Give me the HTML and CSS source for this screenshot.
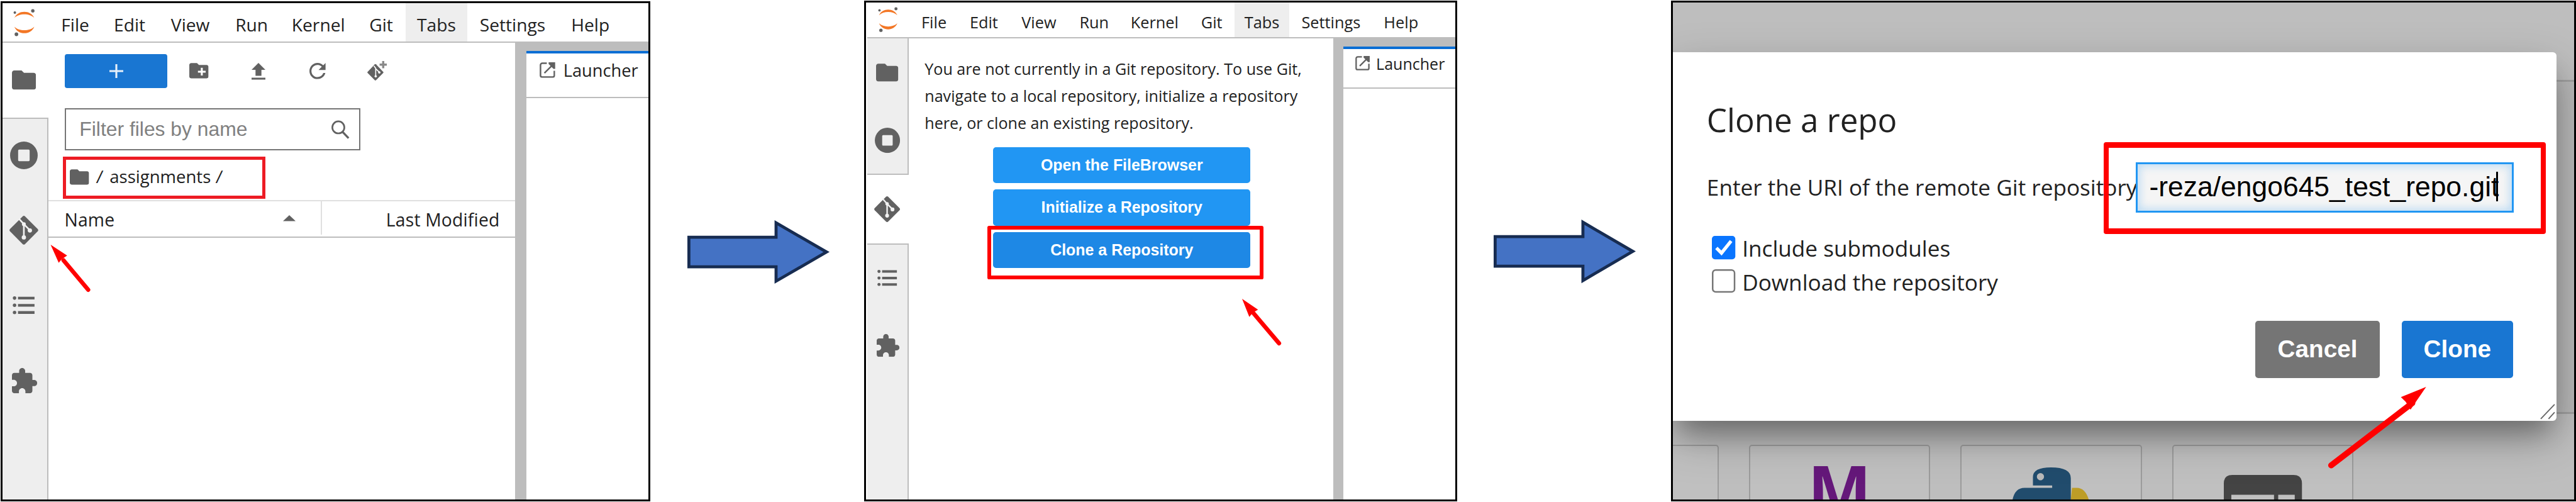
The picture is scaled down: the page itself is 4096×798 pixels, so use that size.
FILE: index.html
```html
<!DOCTYPE html>
<html lang="en">
<head>
<meta charset="utf-8">
<title>Cloning a repository in JupyterLab</title>
<link rel="stylesheet" href="styles.css">
</head>
<body>
<svg class="sprite" aria-hidden="true">
  <symbol id="jupyter" viewBox="0 0 38 46">
    <path d="M2 15C8 1 30 1 36 15 28 7 10 7 2 15z" fill="#f37726"/>
    <path d="M2 30C8 45 30 45 36 30 28 38 10 38 2 30z" fill="#f37726"/>
    <circle cx="2.8" cy="6" r="2.2" fill="#616161"/><circle cx="33.5" cy="3" r="2.9" fill="#616161"/><circle cx="5.5" cy="43" r="3.1" fill="#616161"/>
  </symbol>
  <symbol id="folder" viewBox="2 4 20 16"><path d="M10 4H4c-1.100 0-2 .9-2 2v12c0 1.100.9 2 2 2h16c1.100 0 2-.9 2-2V8c0-1.100-.9-2-2-2h-8z"/></symbol>
  <symbol id="stop" viewBox="0 0 24 24"><path fill-rule="evenodd" d="M12 0a12 12 0 1 0 0 24 12 12 0 0 0 0-24zM7.900 7h8.200q.9 0 .9.900v8.200q0 .9-.9.900H7.900q-.9 0-.9-.9V7.900q0-.9.9-.9z"/></symbol>
  <symbol id="git" viewBox="0 0 24 24">
    <path d="M11 .5q1-.9 2 0l10.500 10.500q.9 1 0 2L13 23.500q-1 .9-2 0L.5 13q-.9-1 0-2z"/>
    <path class="hole" d="M8 2.500L12 7v11M12 7l4.600 4.600" />
    <circle class="node" cx="12" cy="18" r="1.800"/><circle class="node" cx="17" cy="12.200" r="1.800"/><circle class="node" cx="12" cy="7" r="1.600"/>
  </symbol>
  <symbol id="list" viewBox="0 0 36 30">
    <circle cx="2.800" cy="3" r="2.900"/><circle cx="2.800" cy="15" r="2.900"/><circle cx="2.800" cy="27" r="2.900"/>
    <path d="M8.500.7H36v4.600H8.500zM8.500 12.700H36v4.600H8.500zM8.500 24.700H36v4.600H8.500z"/>
  </symbol>
  <symbol id="puzzle" viewBox="2 1 21 21"><path d="M20.500 11H19V7c0-1.100-.9-2-2-2h-4V3.500C13 2.120 11.880 1 10.500 1S8 2.120 8 3.500V5H4c-1.100 0-1.990.9-1.990 2v3.800H3.500c1.490 0 2.700 1.210 2.700 2.700s-1.210 2.700-2.700 2.700H2V20c0 1.100.9 2 2 2h3.800v-1.500c0-1.490 1.210-2.700 2.700-2.700 1.490 0 2.700 1.210 2.700 2.700V22H17c1.100 0 2-.9 2-2v-4h1.500c1.380 0 2.500-1.120 2.500-2.500S21.880 11 20.500 11z"/></symbol>
  <symbol id="newfolder" viewBox="2 4 20 16"><path d="M20 6h-8l-2-2H4c-1.110 0-1.990.89-1.990 2L2 18c0 1.110.89 2 2 2h16c1.110 0 2-.89 2-2V8c0-1.110-.89-2-2-2zm-1 8h-3v3h-2v-3h-3v-2h3V9h2v3h3v2z"/></symbol>
  <symbol id="upload" viewBox="5 3 14 17"><path d="M9 16h6v-6h4l-7-7-7 7h4zm-4 2h14v2H5z"/></symbol>
  <symbol id="refresh" viewBox="4 4 16 16"><path d="M17.650 6.350C16.200 4.900 14.210 4 12 4c-4.420 0-7.990 3.580-7.990 8s3.570 8 7.990 8c3.730 0 6.840-2.550 7.730-6h-2.080c-.82 2.330-3.040 4-5.650 4-3.310 0-6-2.690-6-6s2.690-6 6-6c1.660 0 3.140.69 4.220 1.780L13 11h7V4l-2.350 2.350z"/></symbol>
  <symbol id="launch" viewBox="0 0 26 26">
    <path d="M12 1.500H4.500a3 3 0 0 0-3 3V22a2.500 2.500 0 0 0 2.500 2.500h18a2.500 2.500 0 0 0 2.500-2.500v-8M8 18L21 5" fill="none" stroke="#616161" stroke-width="2.600"/>
    <path d="M15 0h11v11h-2.800L15 2.800z" fill="#616161"/>
  </symbol>
</svg>

<main class="guide">

  <section class="window window-files">
    <nav class="menubar">
      <svg class="logo"><use href="#jupyter"/></svg>
      <span class="m-file">File</span><span class="m-edit">Edit</span><span class="m-view">View</span><span class="m-run">Run</span><span class="m-kernel">Kernel</span><span class="m-git">Git</span><span class="m-tabs hovered">Tabs</span><span class="m-settings">Settings</span><span class="m-help">Help</span>
    </nav>
    <div class="workspace">
      <aside class="sidebar">
        <div class="tab active"><svg class="i-folder"><use href="#folder"/></svg></div>
        <div class="tab first"><svg class="i-stop"><use href="#stop"/></svg></div>
        <div class="tab"><svg class="i-git"><use href="#git"/></svg></div>
        <div class="tab"><svg class="i-list"><use href="#list"/></svg></div>
        <div class="tab"><svg class="i-puzzle"><use href="#puzzle"/></svg></div>
        <div class="tab rest"></div>
      </aside>
      <div class="browser">
        <div class="toolbar">
          <div class="new"><svg viewBox="0 0 24 24"><path d="M12 0v24M0 12h24" stroke="#e6f0fa" stroke-width="3.400"/></svg></div>
          <div class="tool"><svg class="t-folder"><use href="#newfolder"/></svg></div>
          <div class="tool"><svg class="t-upload"><use href="#upload"/></svg></div>
          <div class="tool"><svg class="t-refresh"><use href="#refresh"/></svg></div>
          <div class="tool"><svg class="t-git" viewBox="0 0 33 33">
            <path d="M12.500 5.500q1-1 2 0l12 12.500q.9 1 0 2l-12 12q-1 1-2 0L.6 20q-.9-1 0-2z"/>
            <path d="M11 8l3 4v13M14 13l6 5.500" fill="none" stroke="#fff" stroke-width="1.700"/><circle cx="14" cy="25.500" r="1.900" fill="#fff"/><circle cx="20" cy="19" r="1.900" fill="#fff"/>
            <path d="M26.500 0v12M20.500 6h12" stroke="#8a8a8a" stroke-width="3.600"/></svg></div>
        </div>
        <div class="filter"><span>Filter files by name</span>
          <svg viewBox="0 0 30 31"><circle cx="11.500" cy="12" r="10" fill="none" stroke="#616161" stroke-width="2.800"/><path d="M18.500 19.500L28.500 30" stroke="#616161" stroke-width="3.400"/></svg>
        </div>
        <div class="crumbs"><svg><use href="#folder"/></svg><span class="sep">/</span><span class="dir">assignments</span><span class="sep">/</span></div>
        <div class="columns"><div class="col-name"><span>Name</span><svg viewBox="0 0 21 10"><path d="M10.500 0L21 10H0z"/></svg></div><div class="col-mod">Last Modified</div></div>
      </div>
      <div class="dock">
        <div class="dock-tab"><svg><use href="#launch"/></svg><span>Launcher</span></div>
        <div class="dock-body"></div>
      </div>
    </div>
    <svg class="pointer pointer-a" viewBox="0 0 70 82"><path d="M22 26L63 75" stroke="#f00" stroke-width="7" stroke-linecap="round"/><path d="M.5 0L28 18 19 24 14 30z" fill="#f00"/></svg>
  </section>

  <div class="connector"><svg viewBox="0 0 237 108"><path d="M2.500 29.500H147.500V5.500L231.500 54 147.500 102.500V78.500H2.500z"/></svg></div>

  <section class="window window-git">
    <nav class="menubar">
      <svg class="logo"><use href="#jupyter"/></svg>
      <span class="m-file">File</span><span class="m-edit">Edit</span><span class="m-view">View</span><span class="m-run">Run</span><span class="m-kernel">Kernel</span><span class="m-git">Git</span><span class="m-tabs hovered">Tabs</span><span class="m-settings">Settings</span><span class="m-help">Help</span>
    </nav>
    <div class="workspace">
      <aside class="sidebar">
        <div class="tab"><svg class="i-folder"><use href="#folder"/></svg></div>
        <div class="tab last"><svg class="i-stop"><use href="#stop"/></svg></div>
        <div class="tab active"><svg class="i-git"><use href="#git"/></svg></div>
        <div class="tab first"><svg class="i-list"><use href="#list"/></svg></div>
        <div class="tab"><svg class="i-puzzle"><use href="#puzzle"/></svg></div>
        <div class="tab rest"></div>
      </aside>
      <div class="git-panel">
        <p>You are not currently in a Git repository. To use Git,<br>navigate to a local repository, initialize a repository<br>here, or clone an existing repository.</p>
        <div class="actions">
          <div class="action">Open the FileBrowser</div>
          <div class="action">Initialize a Repository</div>
          <div class="action pressed">Clone a Repository<div class="mark mark-clone"></div></div>
        </div>
      </div>
      <div class="dock">
        <div class="dock-tab"><svg><use href="#launch"/></svg><span>Launcher</span></div>
        <div class="dock-body"></div>
      </div>
    </div>
    <svg class="pointer pointer-b" viewBox="0 0 68 82"><path d="M19 24L61.500 74" stroke="#f00" stroke-width="7" stroke-linecap="round"/><path d="M0 0L26.500 18 18 23 12 30z" fill="#f00"/></svg>
  </section>

  <div class="connector second"><svg viewBox="0 0 237 108"><path d="M2.500 29.500H148.500V5.500L231.500 54 148.500 102.500V78.500H2.500z"/></svg></div>

  <section class="window window-dialog">
    <div class="dialog">
      <h1>Clone a repo</h1>
      <div class="uri"><label>Enter the URI of the remote Git repository</label><div class="field"><span>-reza/engo645_test_repo.git</span><i class="caret"></i></div><div class="mark mark-uri"></div></div>
      <div class="option"><svg viewBox="0 0 39 39"><rect width="39" height="39" rx="5" fill="#0a75ff"/><path d="M7.500 20L16 28.500 32 8.500" fill="none" stroke="#fff" stroke-width="5.500"/></svg><span>Include submodules</span></div>
      <div class="option"><svg viewBox="0 0 39 39"><rect x="1.300" y="1.300" width="36.400" height="36.400" rx="5" fill="#fff" stroke="#767676" stroke-width="2.600"/></svg><span>Download the repository</span></div>
      <div class="buttons"><div class="btn cancel">Cancel</div><div class="btn accept">Clone</div></div>
      <svg class="grip" viewBox="0 0 26 26"><path d="M1 25L24 1M14 25l10-11" stroke="#666" stroke-width="2" fill="none"/></svg>
    </div>
    <div class="backdrop">
      <div class="launcher"></div>
      <div class="cards">
        <div class="card cut"></div>
        <div class="card"><b class="md">M</b></div>
        <div class="card"><svg class="python" viewBox="0 0 128 54"><path d="M99 34h8q14 0 20 20H97z" fill="#bd9d27"/><path d="M34 30V16Q34 0 64 0q33 0 33 18v36H0q4-20 20-20h46v-4z" fill="#214c6d"/><ellipse cx="46.500" cy="15.500" rx="6" ry="6" fill="#bababa"/></svg></div>
        <div class="card"><svg class="terminal" viewBox="0 0 130 41"><path d="M0 41V14Q0 0 14 0H116Q130 0 130 14V41H118V33H90.500V41H83.500V33H12.500V41z" fill="#444"/></svg></div>
      </div>
    </div>
    <svg class="pointer pointer-c" viewBox="0 0 168 138"><path d="M7 131.500L142 28" stroke="#f00" stroke-width="10" stroke-linecap="round"/><path d="M165 1L123 18 131 26 139 39z" fill="#f00"/></svg>
  </section>

</main>
</body>
</html>
```

FILE: styles.css
```css
* { box-sizing: border-box; }
html, body { margin: 0; padding: 0; background: #fff; overflow: hidden; }
.sprite { position: absolute; width: 0; height: 0; }
svg { display: block; flex: none; overflow: visible; fill: #616161; }
.hole { fill: none; stroke: #f2f2f2; stroke-width: 1.400; }
.node { fill: #f2f2f2; }

/* The whole strip is laid out on a 4285 x 835 sheet.
   Border widths carry a small surplus so they stay whole after zooming. */
.guide {
  zoom: 0.95589;
  display: flex;
  width: 4285px;
  height: 835px;
  padding-left: 1px;
  font-family: "Open Sans", "Noto Sans", sans-serif;
  color: #212121;
}
.window {
  position: relative;
  flex: none;
  display: flex;
  flex-direction: column;
  margin-top: 1px;
  height: 833px;
  border: 3.150px solid #000;
  background: #fff;
}
.window-files { width: 1081px; margin-top: 2px; height: 832px; font-size: 29.500px; }
.window-git { width: 987px; font-size: 26.500px; }
.window-dialog { width: 1505px; overflow: hidden; font-size: 36.800px; }

/* Menu bar */
.menubar { display: flex; flex: none; border-bottom: 2.100px solid #bdbdbd; white-space: nowrap; }
.menubar span { flex: none; display: flex; justify-content: center; align-items: center; padding-top: 8px; }
.menubar .hovered { background: #eee; }
.window-files .menubar { height: 66px; }
.window-files .logo { width: 37px; height: 50px; margin: 7px 22px 0 18px; }
.window-files .m-file { width: 88px; }
.window-files .m-edit { width: 93px; }
.window-files .m-view { width: 109px; }
.window-files .m-run { width: 95px; }
.window-files .m-kernel { width: 127px; }
.window-files .m-git { width: 82px; }
.window-files .m-tabs { width: 102px; }
.window-files .m-settings { width: 151px; }
.window-files .m-help { width: 108px; }
.window-git .menubar { height: 60px; margin-left: 2px; }
.window-git .logo { width: 34px; height: 44px; margin: 6px 19px 0 18px; }
.window-git .m-file { width: 81px; }
.window-git .m-edit { width: 85px; }
.window-git .m-view { width: 98px; }
.window-git .m-run { width: 86px; }
.window-git .m-kernel { width: 115px; }
.window-git .m-git { width: 75px; }
.window-git .m-tabs { width: 92px; }
.window-git .m-settings { width: 138px; }
.window-git .m-help { width: 95px; }

/* Side tabs */
.workspace { display: flex; flex: 1; min-height: 0; }
.sidebar { flex: none; display: flex; flex-direction: column; }
.tab { flex: none; display: flex; align-items: center; justify-content: center; background: #eee; border-right: 2.100px solid #bdbdbd; }
.tab.active { background: #fff; border-right-color: #fff; }
.tab.first { border-top: 2.100px solid #bdbdbd; }
.tab.last { border-bottom: 2.100px solid #bdbdbd; }
.tab.rest { flex: 1; }
.window-files .sidebar { width: 76px; }
.window-files .tab { height: 125px; padding-right: 3px; }
.window-files .tab.active { height: 124px; }
.window-files .tab.rest { height: auto; }
.window-files .i-folder { width: 40px; height: 32px; }
.window-files .i-stop { width: 46px; height: 46px; }
.window-files .i-git { width: 48px; height: 48px; }
.window-files .i-list { width: 37px; height: 30px; }
.window-files .i-puzzle { width: 42px; height: 42px; margin-left: 2px; }
.window-git .sidebar { width: 70px; margin-left: 2px; }
.window-git .tab { height: 113.500px; }
.window-git .tab.rest { height: auto; }
.window-git .i-folder { width: 37px; height: 30px; }
.window-git .i-stop { width: 42px; height: 42px; }
.window-git .i-git { width: 43px; height: 43px; }
.window-git .i-list { width: 33px; height: 27px; }
.window-git .i-puzzle { width: 38px; height: 38px; margin-left: 2px; }

/* File browser */
.browser { width: 777px; flex: none; }
.toolbar { display: flex; align-items: center; padding: 19px 0 0 28px; height: 75px; }
.new { width: 170px; height: 56px; margin-right: 3px; border-radius: 4px; background: #1976d2; display: flex; align-items: center; justify-content: center; }
.new svg { width: 23px; height: 23px; }
.tool { width: 99px; display: flex; justify-content: center; }
.t-folder { width: 32px; height: 26px; }
.t-upload { width: 23px; height: 28px; }
.t-refresh { width: 27px; height: 27px; }
.t-git { width: 33px; height: 33px; }
.filter {
  display: flex; align-items: center; justify-content: space-between;
  width: 491px; height: 70px; margin: 34px 0 0 28px; padding: 0 16px 0 22px;
  border: 2.100px solid #757575;
  font: 33.300px "Liberation Sans", Arial, sans-serif; color: #808080;
}
.filter svg { width: 30px; height: 31px; }
.crumbs {
  display: flex; align-items: center;
  width: 336px; height: 71px; margin: 10px 0 0 25px; padding: 0 0 4px 6px;
  border: 5.240px solid #ed1c24;
  font-size: 28.800px;
}
.crumbs svg { width: 32px; height: 26px; margin: 2px 11px 0 0; }
.crumbs .sep { width: 14px; text-align: center; transform: skewX(-6deg); }
.crumbs .dir { width: 167px; margin: 0 9px; }
.columns { display: flex; height: 62px; margin-top: 2px; border-top: 2.100px solid #e0e0e0; border-bottom: 2.100px solid #bdbdbd; font-size: 29.600px; font-weight: 500; letter-spacing: .2px; }
.col-name { display: flex; align-items: center; justify-content: space-between; width: 455px; height: 55px; padding: 5px 41px 0 27px; border-right: 2.100px solid #e0e0e0; }
.col-name svg { width: 21px; height: 10px; margin-bottom: 5px; }
.col-mod { flex: 1; display: flex; align-items: center; justify-content: flex-end; padding: 3px 26px 0 0; }

/* Main dock */
.dock { flex: 1; display: flex; flex-direction: column; background: #bdbdbd; white-space: nowrap; overflow: hidden; }
.dock-tab { display: flex; background: #fff; border-top: 4.200px solid #0a6ed4; border-bottom: 2.100px solid #bdbdbd; }
.dock-body { flex: 1; background: #fff; }
.window-files .dock { padding: 14px 0 0 19px; }
.window-files .dock-tab { height: 78px; padding: 14px 0 0 22px; font-size: 28.500px; line-height: 26px; gap: 13px; }
.window-files .dock-tab svg { width: 26px; height: 26px; }
.window-git .dock { padding: 13px 0 0 16px; }
.window-git .dock-tab { height: 70px; padding: 12px 0 0 20px; font-size: 26.200px; line-height: 24px; gap: 11px; }
.window-git .dock-tab svg { width: 24px; height: 24px; }
.dock-tab span { padding-top: 1px; }

/* Git panel */
.git-panel { flex: none; width: 706px; white-space: nowrap; }
.git-panel p { margin: 27.500px 0 0 26px; font-size: 26.300px; line-height: 45px; }
.actions { display: flex; flex-direction: column; gap: 10.500px; width: 428px; margin: 18px 0 0 140px; }
.action {
  position: relative; height: 60px; border-radius: 5px; background: #2196f3; color: #fff;
  display: flex; align-items: center; justify-content: center;
  font: bold 26.100px "Liberation Sans", Arial, sans-serif;
}
.action.pressed { background: #1e88e5; }

/* Red annotations */
.mark { position: absolute; border: 6.300px solid #f00; border-radius: 3px; }
.mark-clone { left: -10px; top: -10px; width: 460px; height: 89px; }
.mark-uri { left: 660.500px; top: -34px; width: 735px; height: 153px; border-width: 9.450px 8.400px; border-radius: 4px; }
.pointer { position: absolute; }
.pointer-a { left: 80px; top: 402px; width: 70px; height: 82px; }
.pointer-b { left: 626px; top: 493px; width: 68px; height: 82px; }
.pointer-c { left: 1088px; top: 638px; width: 168px; height: 138px; }

/* Step connectors */
.connector { flex: none; width: 355px; padding: 365px 0 0 61px; }
.connector.second { width: 356px; padding-top: 364px; }
.connector svg { width: 237px; height: 108px; }
.connector path { fill: #4472c4; stroke: #172c51; stroke-width: 5; }

/* Dialog */
.window-dialog { background: #bebebe; }
.dialog {
  position: relative; z-index: 1; flex: none;
  width: 1470px; height: 613px; margin-top: 83px; padding-left: 56px;
  border-radius: 0 6px 6px 0; background: #fff; white-space: nowrap;
  box-shadow: 0 30px 40px -12px rgba(0,0,0,.28), 0 28px 75px rgba(0,0,0,.26);
}
.dialog h1 { margin: 72px 0 0; font-size: 53.500px; font-weight: 400; line-height: 80px; }
.uri { position: relative; display: flex; align-items: center; height: 83px; margin-top: 31px; }
.uri label { width: 714px; padding-bottom: 1px; }
.field {
  position: relative; display: flex; align-items: center; width: 628px; height: 83px; padding: 0 0 2px 19px;
  border: 3.150px solid #2196f3; background: #f5f5f5; color: #000;
  box-shadow: inset 0 0 14px 3px rgba(33,150,243,.28);
  font: 46.500px "Liberation Sans", Arial, sans-serif;
}
.caret { position: absolute; left: 596px; top: 12px; width: 3px; height: 50px; background: #000; }
.option { display: flex; align-items: center; gap: 11px; height: 39px; margin: 0 0 17px 9px; line-height: 39px; }
.uri + .option { margin-top: 39px; }
.option svg { width: 39px; height: 39px; }
.option span { padding-top: 3px; }
.buttons { display: flex; justify-content: flex-end; gap: 36px; margin: 46px 73px 0 0; }
.btn { display: flex; align-items: center; justify-content: center; height: 96px; border-radius: 5px; color: #fff; font: bold 40.500px "Liberation Sans", Arial, sans-serif; }
.cancel { width: 208px; background: #757575; }
.accept { width: 185px; background: #1976d2; }
.grip { position: absolute; right: 2px; bottom: 3px; width: 26px; height: 26px; }
.pointer-c { z-index: 2; }

/* Dimmed launcher under the dialog */
.backdrop { position: relative; flex: 1; }
.launcher { position: absolute; right: 0; top: -567px; width: 60px; height: 555px; border: solid #a0a0a0; border-width: 3.150px 0; background: #b8b8b8; }
.cards { display: flex; gap: 50px; padding-top: 39px; height: 131px; }
.card { width: 302px; height: 92px; border: 2.100px solid #9c9c9c; border-bottom: 0; border-radius: 5px 5px 0 0; background: #c0c0c0; overflow: hidden; display: flex; justify-content: center; }
.card.cut { width: 76px; border-left: 0; border-radius: 0 5px 0 0; }
.md { font-size: 112px; line-height: 112px; margin-top: 15px; color: #65187a; height: 80px; }
.python { width: 128px; height: 54px; margin-top: 36px; }
.terminal { width: 130px; height: 41px; margin-top: 49px; }
```
